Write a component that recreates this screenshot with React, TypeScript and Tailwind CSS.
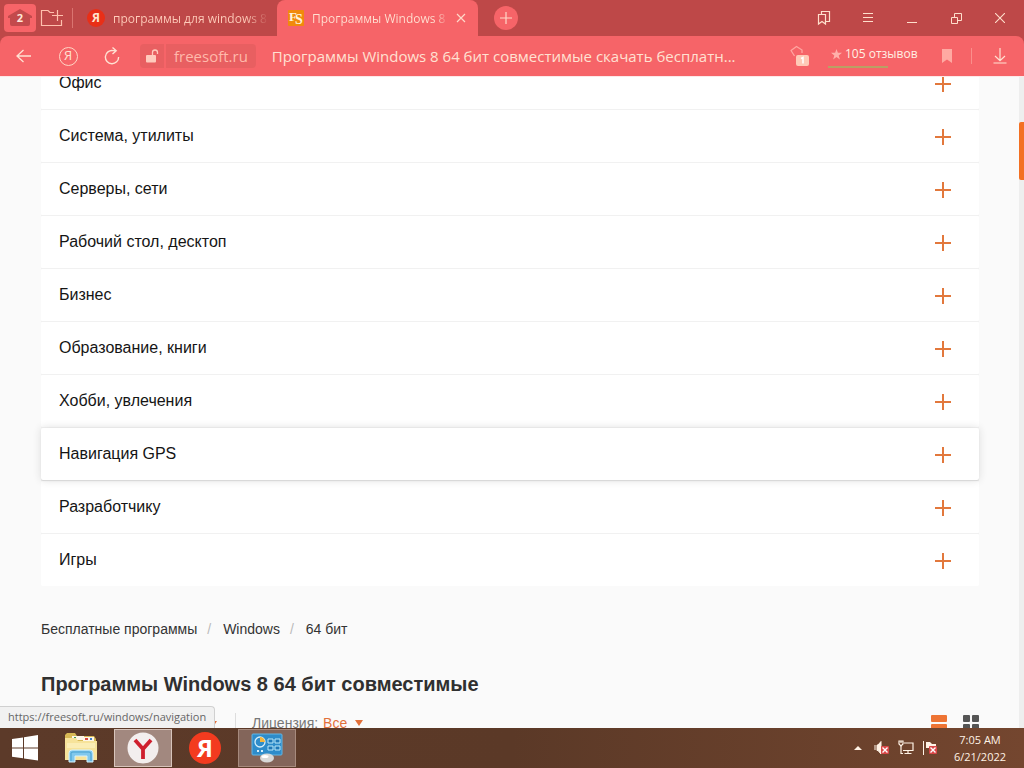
import type { ReactNode } from 'react';

const categories = [
  'Офис',
  'Система, утилиты',
  'Серверы, сети',
  'Рабочий стол, десктоп',
  'Бизнес',
  'Образование, книги',
  'Хобби, увлечения',
  'Навигация GPS',
  'Разработчику',
  'Игры',
];
const hovered = 'Навигация GPS';

function IconButton({ label, className = '', children }: { label: string; className?: string; children: ReactNode }) {
  return (
    <button type="button" aria-label={label} className={`flex shrink-0 items-center justify-center ${className}`}>
      {children}
    </button>
  );
}

function YandexMark({ className }: { className: string }) {
  return (
    <span className={`flex shrink-0 items-center justify-center rounded-full ${className}`}>Я</span>
  );
}

function TabStrip() {
  return (
    <div className="flex h-9 shrink-0 bg-[#be4848]">
      <div className="flex w-[277px] shrink-0 items-center">
        <button type="button" aria-label="Открытые вкладки: 2" className="relative ml-1 flex h-7 w-8 items-center justify-center rounded bg-[#f76468]">
          <svg width="24" height="20" viewBox="0 0 24 20" className="absolute">
            <path d="M12 1 24 8 V10 H22 V16 Q22 18 20 18 H4 Q2 18 2 16 V10 H0 V8Z" fill="#c34a4c" />
          </svg>
          <span className="relative text-[11px] font-bold text-[#ffe8d8]">2</span>
        </button>
        <IconButton label="Новая группа" className="ml-1 h-7 w-6">
          <svg width="24" height="20" viewBox="0 0 24 20" fill="none" stroke="#ffc0ad" strokeWidth="1.2">
            <path d="M14 4.5H10L8 2.500H1.500V17.500H21.500V12M17.500 2V13M12 7.500H23" />
          </svg>
        </IconButton>
        <span className="ml-2 h-5 w-px bg-[#da7470]" />
        <button type="button" className="ml-[14px] flex min-w-0 items-center gap-2">
          <YandexMark className="h-[18px] w-[18px] bg-[#e92f17] text-[12px] font-bold text-[#ffe4ce]" />
          <span className="w-[156px] overflow-hidden whitespace-nowrap bg-linear-to-r from-[#ffcdbb] from-85% to-transparent bg-clip-text pt-px text-left text-xs/5 text-transparent">
            программы для windows 8
          </span>
        </button>
      </div>
      <div className="flex w-[201px] shrink-0 items-center rounded-t-lg bg-[#f66468] pl-[11px]">
        <button type="button" className="flex items-center gap-2">
          <svg width="16" height="16" viewBox="0 0 16 16">
            <rect width="16" height="16" rx="1" fill="#f18a0b" />
            <text x="1" y="11" fontSize="13" fontWeight="700" fontFamily="Liberation Serif, serif" fill="#fff3d8">F</text>
            <text x="7" y="14" fontSize="14" fontWeight="700" fontFamily="Liberation Serif, serif" fill="#fff3d8">S</text>
          </svg>
          <span className="w-[137px] overflow-hidden whitespace-nowrap bg-linear-to-r from-[#ffe1d2] from-90% to-transparent bg-clip-text pt-px text-left text-xs/5 text-transparent">
            Программы Windows 8 64 бит
          </span>
        </button>
        <IconButton label="Закрыть вкладку" className="ml-[2px] h-5 w-5">
          <svg width="10" height="10" viewBox="0 0 10 10" stroke="#ffd8c8" strokeWidth="1.2">
            <path d="M1 1 9 9M9 1 1 9" />
          </svg>
        </IconButton>
      </div>
      <IconButton label="Новая вкладка" className="ml-4 mt-[6px] h-6 w-6 rounded-full bg-[#f66468]">
        <svg width="12" height="12" viewBox="0 0 12 12" stroke="#ffd8c8" strokeWidth="1.2">
          <path d="M6 0V12M0 6H12" />
        </svg>
      </IconButton>
      <div className="ml-auto flex text-[#ffdfcc]">
        <IconButton label="Закладки" className="w-11">
          <svg width="14" height="16" viewBox="0 0 14 16" fill="none" stroke="currentColor" strokeWidth="1.2">
            <path d="M1.500 4.500H8.500V14L5 11.500 1.500 14ZM4.500 4.500V1.500H12.500V11.500H8.500" />
          </svg>
        </IconButton>
        <IconButton label="Меню" className="w-11">
          <svg width="12" height="12" viewBox="0 0 12 12" stroke="currentColor">
            <path d="M1 1.500H11M1 5.500H11M1 9.500H11" />
          </svg>
        </IconButton>
        <IconButton label="Свернуть" className="w-11">
          <svg width="10" height="12" viewBox="0 0 10 12" stroke="currentColor">
            <path d="M0 10.500H10" />
          </svg>
        </IconButton>
        <IconButton label="Восстановить" className="w-11">
          <svg width="11" height="11" viewBox="0 0 11 11" fill="none" stroke="currentColor">
            <path d="M.5 4.500H6.500V10.500H.5ZM3.500 4.500V.5H10.500V7.500H6.500" />
          </svg>
        </IconButton>
        <IconButton label="Закрыть" className="mr-[2px] w-11">
          <svg width="10" height="10" viewBox="0 0 10 10" stroke="currentColor" strokeWidth="1.1">
            <path d="M0 0 10 10M10 0 0 10" />
          </svg>
        </IconButton>
      </div>
    </div>
  );
}

function Toolbar() {
  return (
    <div className="shrink-0 bg-[#be4848]">
      <div className="flex h-10 items-center rounded-t-lg bg-[#f66468] text-[#ffe1d2]">
        <IconButton label="Назад" className="ml-3 w-6">
          <svg width="16" height="14" viewBox="0 0 16 14" fill="none" stroke="currentColor" strokeWidth="1.3">
            <path d="M7.500 1 1 7 7.500 13M1 7H15" />
          </svg>
        </IconButton>
        <IconButton label="Яндекс" className="ml-5 w-6">
          <YandexMark className="h-[19px] w-[19px] border border-[#ffd6c5] text-[13px]" />
        </IconButton>
        <IconButton label="Обновить" className="ml-5 w-6">
          <svg width="16" height="18" viewBox="0 0 16 18" fill="none" stroke="currentColor" strokeWidth="1.4">
            <path d="M14.600 10A6.600 6.600 0 1 1 9 3.600H12M8.500 .5 12.200 3.700 8.500 7" />
          </svg>
        </IconButton>
        <div className="ml-4 flex h-6 gap-[2px]">
          <IconButton label="Сведения о сайте" className="w-6 rounded-l bg-[#e85f61]">
            <svg width="14" height="14" viewBox="0 0 14 14">
              <rect x="1" y="6" width="10" height="7.5" rx="1" fill="#ffcbbd" />
              <path d="M7.500 6V3.500A2.500 2.500 0 0 1 12.500 3.500V5" fill="none" stroke="#ffcbbd" strokeWidth="1.3" />
            </svg>
          </IconButton>
          <a href="#freesoft" className="flex items-center rounded-r bg-[#e85f61] px-2 text-[15px] text-[#ffb9ab]">
            freesoft.ru
          </a>
        </div>
        <p className="ml-4 min-w-0 truncate text-[15px]">Программы Windows 8 64 бит совместимые скачать бесплатн...</p>
        <div className="ml-auto flex shrink-0 items-center">
          <IconButton label="Защита: 1" className="w-5">
            <svg width="20" height="22" viewBox="0 0 20 22">
              <path d="M4.500 11 1 5.500 6.500 1.500 12 5V8" fill="none" stroke="#ffa5a0" strokeWidth="1.3" strokeLinejoin="round" />
              <rect x="6" y="10" width="13" height="11" rx="2" fill="#ffc9b6" />
              <path d="M11 13.500 13 12.500V18.500" fill="none" stroke="#fff" strokeWidth="1.5" />
            </svg>
          </IconButton>
          <a href="#reviews" className="relative ml-[18px] flex w-[91px] items-center gap-[3px] whitespace-nowrap pb-1 pl-[3px] text-xs/5 text-[#fff0e4]">
            <svg width="11" height="11" viewBox="0 0 12 12" className="shrink-0">
              <path d="M6 0 7.500 4.200H12L8.400 7 9.700 11.500 6 8.800 2.300 11.500 3.600 7 0 4.200H4.500Z" fill="#ffb0aa" />
            </svg>
            <span>105 отзывов</span>
            <span className="absolute bottom-0 left-0 h-[2px] w-[60px] bg-[#b9a064]" />
          </a>
          <IconButton label="В закладки" className="ml-4 w-6">
            <svg width="12" height="14" viewBox="0 0 12 14">
              <path d="M1 0H11V14L6 10.500 1 14Z" fill="#ffa9a2" />
            </svg>
          </IconButton>
          <span className="ml-3 h-4 w-px bg-[#fb8e8b]" />
          <IconButton label="Загрузки" className="ml-4 mr-3 w-6">
            <svg width="14" height="16" viewBox="0 0 14 16" fill="none" stroke="currentColor" strokeWidth="1.2">
              <path d="M7 0V12.500M2 8 7 12.700 12 8M.5 15H13.500" />
            </svg>
          </IconButton>
        </div>
      </div>
    </div>
  );
}

function Page() {
  return (
    <div className="relative flex min-h-0 flex-1 overflow-hidden border-t border-[#fde8e8] bg-[#fafafa] font-['Liberation_Sans',Arial,sans-serif]">
      <main className="-mt-[21px] min-w-0 flex-1 pl-[41px] pr-10">
        <ul className="flex flex-col">
          {categories.map((name) => (
            <li key={name} className="border-t border-[#f1f1f1]">
              <button
                type="button"
                className={
                  name === hovered
                    ? 'relative flex h-[52px] w-full items-center justify-between rounded-xs bg-white pl-[18px] pr-7 text-left text-base text-[#151515] shadow-[0_0_8px_#dcdcdc,0_1px_1px_#d4d4d4]'
                    : 'flex h-[52px] w-full items-center justify-between rounded-xs bg-white pl-[18px] pr-7 text-left text-base text-[#151515]'
                }
              >
                {name}
                <svg width="16" height="16" viewBox="0 0 16 16" stroke="#e2783c" strokeWidth="2" className="mt-[2px]">
                  <path d="M8 0V16M0 8H16" />
                </svg>
              </button>
            </li>
          ))}
        </ul>
        <nav aria-label="Навигация" className="mt-[33px] flex h-5 items-center text-sm text-[#333]">
          <a href="#programs">Бесплатные программы</a>
          <span className="ml-[10px] mr-3 text-[#bbb]">/</span>
          <a href="#windows">Windows</a>
          <span className="ml-[10px] mr-3 text-[#bbb]">/</span>
          <span>64 бит</span>
        </nav>
        <h1 className="mt-[31px] text-xl/7 font-bold text-[#303030]">Программы Windows 8 64 бит совместимые</h1>
        <div className="mt-[15px] flex h-6 items-start text-sm text-[#777]">
          <div className="flex w-[195px] shrink-0 justify-end border-r border-[#ddd] pr-[18px]">
            <svg width="8" height="6" viewBox="0 0 8 6" className="mb-3 mt-2">
              <path d="M0 0H8L4 6Z" fill="#e2703a" />
            </svg>
          </div>
          <button type="button" className="ml-4 flex items-center">
            <span>Лицензия:</span>
            <span className="ml-[5px] text-[#e2703a]">Все</span>
            <svg width="8" height="6" viewBox="0 0 8 6" className="ml-2">
              <path d="M0 0H8L4 6Z" fill="#e2703a" />
            </svg>
          </button>
          <div className="ml-auto mt-[2px] flex gap-4">
            <IconButton label="Список">
              <svg width="16" height="16" viewBox="0 0 16 16" fill="#ee7434">
                <rect width="16" height="7" rx="1" />
                <rect y="9" width="16" height="7" rx="1" />
              </svg>
            </IconButton>
            <IconButton label="Плитка">
              <svg width="16" height="16" viewBox="0 0 16 16" fill="#555">
                <rect width="7" height="7" rx="1" />
                <rect x="9" width="7" height="7" rx="1" />
                <rect y="9" width="7" height="7" rx="1" />
                <rect x="9" y="9" width="7" height="7" rx="1" />
              </svg>
            </IconButton>
          </div>
        </div>
      </main>
      <div className="w-[5px] shrink-0 bg-[#eeeeee] pt-[45px]">
        <div className="h-[58px] rounded-l-xs bg-[#f37022]" />
      </div>
      <div className="absolute bottom-0 left-0 flex h-[22px] items-center rounded-tr border-r border-t border-[#d0d0d0] bg-[#f1f1f1] px-2 font-['Open_Sans','Noto_Sans',sans-serif] text-[11px] text-[#666]">
        https://freesoft.ru/windows/navigation
      </div>
    </div>
  );
}

function CrossBadge() {
  return (
    <g>
      <rect x="7" y="6" width="8" height="8" rx="1" fill="#d94747" />
      <path d="M8.500 7.500 13.500 12.500M13.500 7.500 8.500 12.500" stroke="#fff" strokeWidth="1.400" />
    </g>
  );
}

function Taskbar() {
  return (
    <footer className="flex h-10 shrink-0 items-center bg-linear-to-r from-[#5c3a29] via-[#5b3927] to-[#74462f]">
      <IconButton label="Пуск" className="h-10 w-[50px]">
        <svg width="26" height="26" viewBox="0 0 26 26" fill="#fff">
          <path d="M0 4 11 2.500V12.400H0ZM12 2.300 26 0V12.400H12ZM0 13.400H11V23.300L0 21.800ZM12 13.400H26V25.500L12 23.500Z" />
        </svg>
      </IconButton>
      <IconButton label="Проводник" className="h-10 w-[62px]">
        <svg width="34" height="32" viewBox="0 0 34 32">
          <path d="M1 3 3 1H11L13 4H30L32 7V26H1Z" fill="#d8b955" />
          <path d="M8 4H20V8H8Z" fill="#fff6e8" />
          <path d="M10 5H12V7H10Z" fill="#3f9a54" />
          <path d="M19 5H30V9H19Z" fill="#fff6e8" />
          <path d="M21 6H24V8H21Z" fill="#d9493e" />
          <path d="M26 6H28V8H26Z" fill="#4182c8" />
          <path d="M1 6H12L14 9H33V28H1Z" fill="#f7e39a" />
          <path d="M3 11H31V16H3Z" fill="#fbedb5" />
          <path d="M5 30V21Q5 18 8 18H26Q29 18 29 21V30H23V24H11V30Z" fill="#80c8ed" stroke="#d4f1fb" />
          <path d="M7 29V21Q7 20 9 20H25Q27 20 27 22V29" fill="none" stroke="#479fce" />
        </svg>
      </IconButton>
      <IconButton label="Яндекс Браузер" className="ml-[2px] h-[38px] w-[58px] border border-[#d7c4bb] bg-[#a2887f]">
        <svg width="32" height="32" viewBox="0 0 32 32">
          <circle cx="16" cy="16" r="15.500" fill="#f3eeee" />
          <path d="M8 8 16 17 24 8M16 16V27" fill="none" stroke="#cf1f2e" strokeWidth="3.800" strokeLinejoin="round" />
        </svg>
      </IconButton>
      <IconButton label="Яндекс" className="ml-[2px] h-10 w-[62px]">
        <YandexMark className="h-8 w-8 bg-[#f33b1f] text-2xl font-bold text-white" />
      </IconButton>
      <IconButton label="Панель управления" className="ml-[2px] h-[38px] w-[58px] border border-[#a68a7d] bg-[#83655a]">
        <svg width="32" height="30" viewBox="0 0 32 30">
          <rect x="1" y="1" width="30" height="21" rx="1" fill="#2e8cca" stroke="#60b6e5" />
          <circle cx="9" cy="9" r="5" fill="none" stroke="#d6effa" strokeWidth="1.300" />
          <path d="M9 9V4A5 5 0 0 1 14 9Z" fill="#f4b53c" />
          <path d="M17 6H22V10H17ZM24 6H29V10H24ZM17 13H22V17H17ZM24 13H29V17H24Z" fill="#1f78b7" stroke="#b9e8fa" />
          <path d="M6 18H8M10 18H12" stroke="#d6effa" strokeWidth="2" />
          <ellipse cx="16" cy="25" rx="7" ry="4.500" fill="#d8d9d8" />
          <ellipse cx="14" cy="23.500" rx="3.500" ry="1.500" fill="#fff" />
        </svg>
      </IconButton>
      <div className="ml-auto flex items-center text-[#fff3e6]">
        <IconButton label="Скрытые значки" className="w-6">
          <svg width="8" height="4" viewBox="0 0 8 4" fill="currentColor">
            <path d="M0 4 4 0 8 4Z" />
          </svg>
        </IconButton>
        <IconButton label="Громкость" className="w-6">
          <svg width="16" height="16" viewBox="0 0 16 16">
            <path d="M1 5V10M3 5H4L7 1.500V14L4 10.500H3Z" fill="currentColor" stroke="currentColor" />
            <CrossBadge />
          </svg>
        </IconButton>
        <IconButton label="Сеть" className="w-6">
          <svg width="16" height="16" viewBox="0 0 16 16" fill="none" stroke="currentColor" strokeWidth="1.200">
            <path d="M6 3H15V10.500H5M10 10.500V13.500M6.500 13.500H13.500M3 6V13.500H5" />
            <path d="M1 1V4L3 6 5 4V1ZM3 1V3" />
          </svg>
        </IconButton>
        <IconButton label="Центр поддержки" className="w-6">
          <svg width="16" height="16" viewBox="0 0 16 16">
            <path d="M1.500 1V15" stroke="currentColor" />
            <path d="M4 2H8L10 4H14V9H9L7 8H4Z" fill="currentColor" />
            <CrossBadge />
          </svg>
        </IconButton>
        <button type="button" className="ml-2 mr-[14px] flex w-[60px] flex-col items-center whitespace-nowrap text-[11px]/[17px]">
          <span>7:05 AM</span>
          <span>6/21/2022</span>
        </button>
      </div>
    </footer>
  );
}

export default function App() {
  return (
    <div className="flex h-screen flex-col overflow-hidden font-['Open_Sans','Noto_Sans',sans-serif]">
      <TabStrip />
      <Toolbar />
      <Page />
      <Taskbar />
    </div>
  );
}
